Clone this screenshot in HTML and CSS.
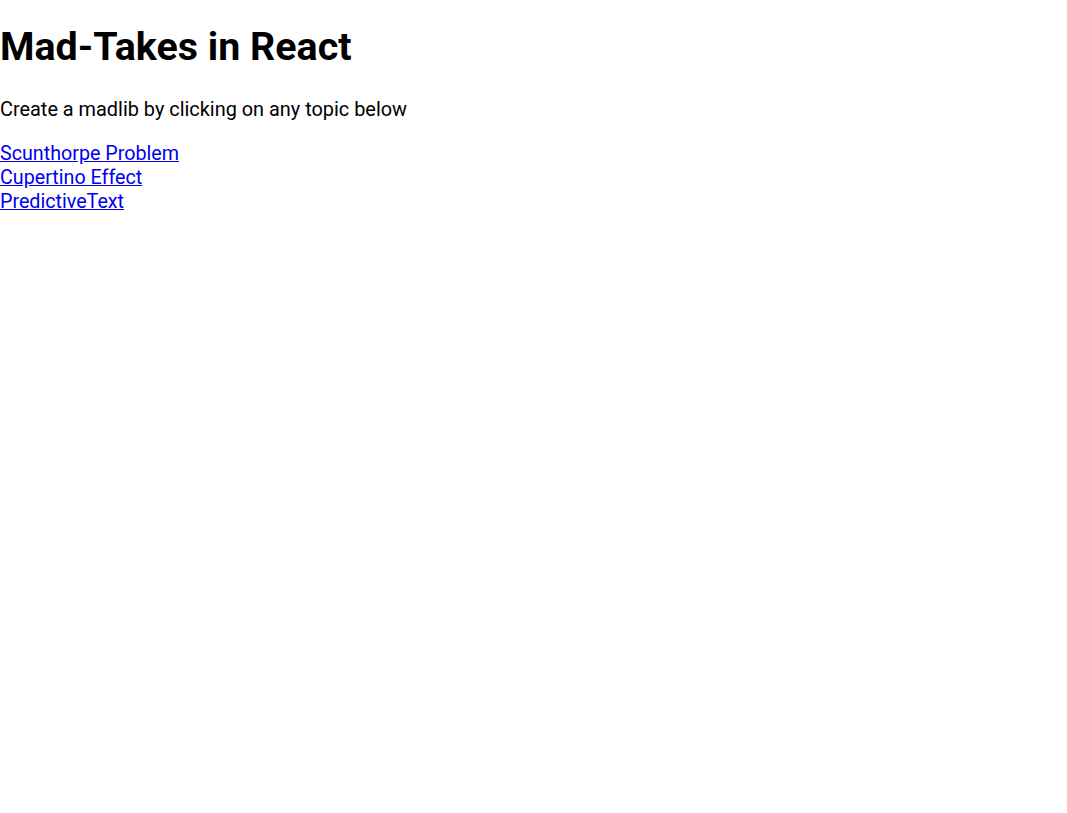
FILE: index.html
```html
<!DOCTYPE html>
<html>
<head>
<meta charset="utf-8">
<title>Mad-Takes in React</title>
<link rel="stylesheet" href="styles.css">
</head>
<body>
<div class="app">
  <h1 class="title">Mad-Takes in React</h1>
  <p class="intro">Create a madlib by clicking on any topic below</p>
  <div class="topics">
    <a class="topic" href="#">Scunthorpe Problem</a>
    <a class="topic" href="#">Cupertino Effect</a>
    <a class="topic" href="#">PredictiveText</a>
  </div>
</div>
</body>
</html>
```
FILE: styles.css
```css
body {
  margin: 0;
  font-family: Roboto, "Liberation Sans", sans-serif;
  font-size: 19.7px;
  color: #000;
  background: #fff;
}
.title {
  font-size: 39.4px;
  font-weight: 700;
  margin: 23px 0 27.6px;
}
.intro {
  font-size: 19.9px;
  margin: 20px 0 21px;
}
.topics {
  display: flex;
  flex-direction: column;
  align-items: flex-start;
}
.topic {
  color: #0000ee;
  text-decoration: underline;
  line-height: 24px;
}
```
